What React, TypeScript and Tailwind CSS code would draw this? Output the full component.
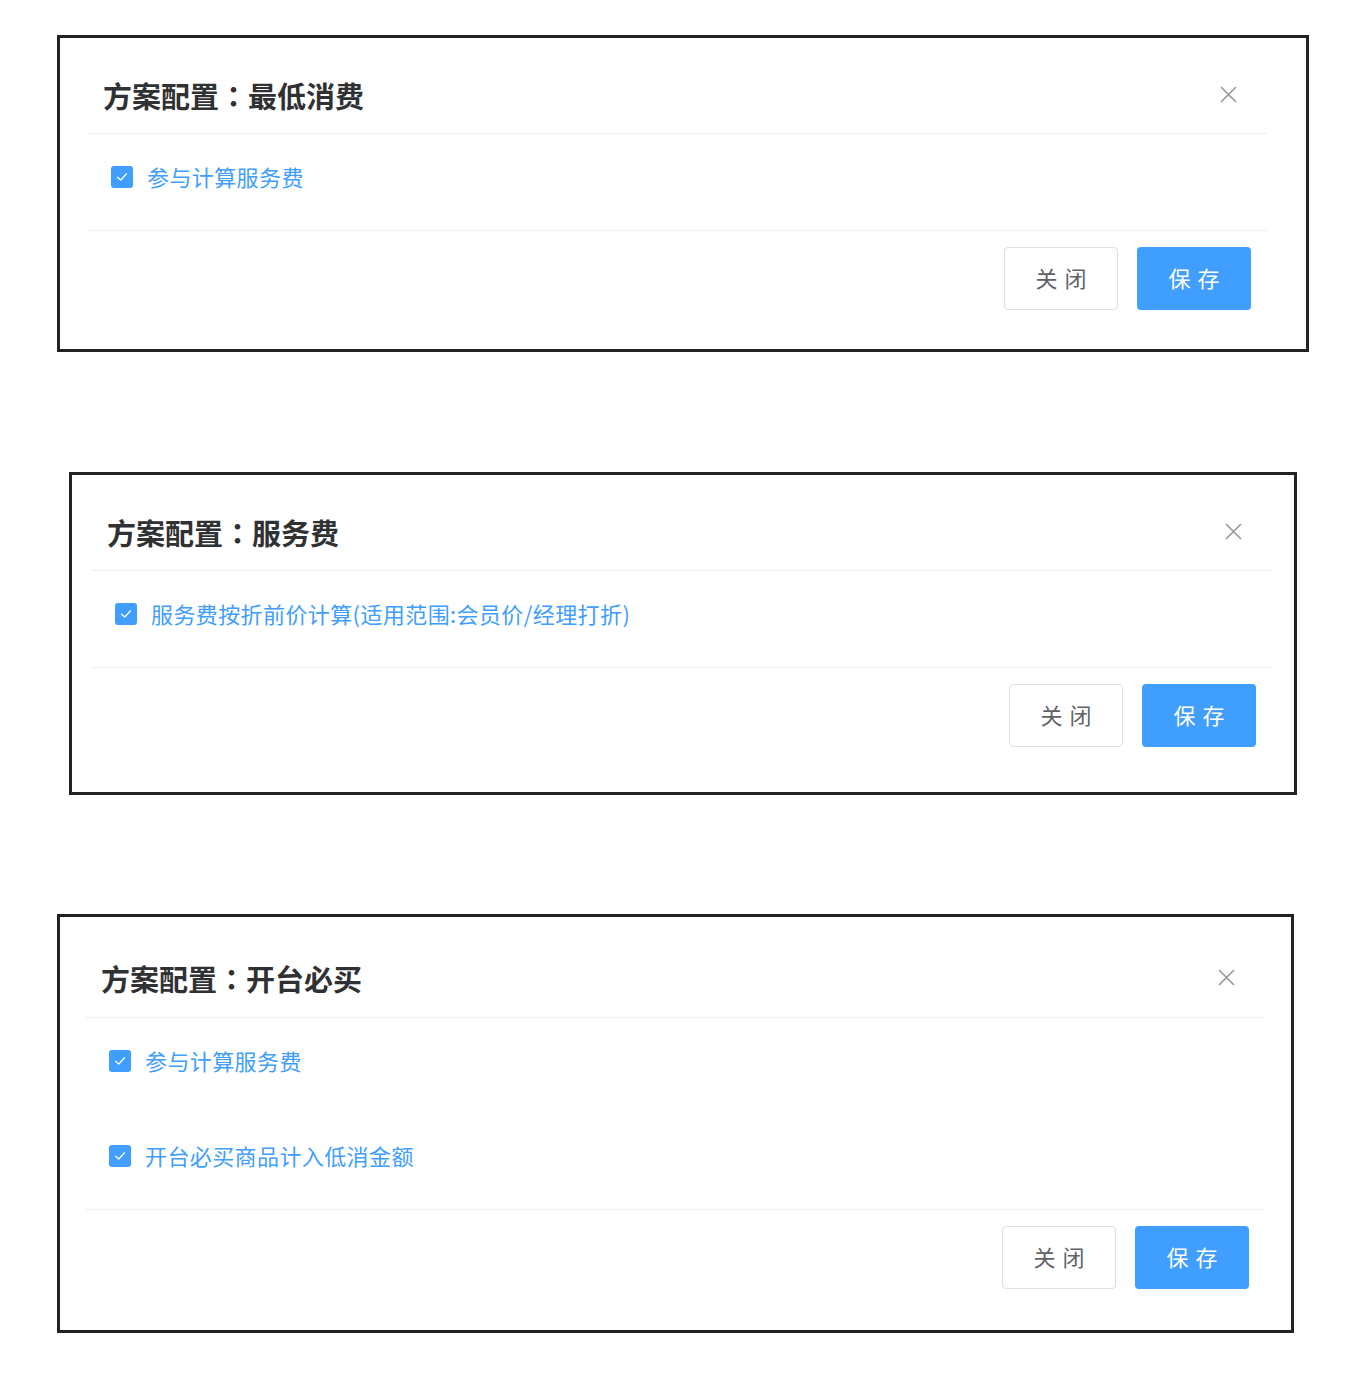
import React from 'react';

type Box = {
  prefix: string;
  name: string;
  options: string[];
  outer: string;
  inner: string;
  headTop: string;
  headBottom: string;
  footBottom: string;
};

const boxes: Box[] = [
  {
    prefix: '方案配置',
    name: '最低消费',
    options: ['参与计算服务费'],
    outer: 'mt-[35px] ml-[57px] w-[1252px]',
    inner: 'pl-[28px] pr-[39px]',
    headTop: 'pt-[39px]',
    headBottom: 'pb-[20px]',
    footBottom: 'pb-[39px]',
  },
  {
    prefix: '方案配置',
    name: '服务费',
    options: ['服务费按折前价计算(适用范围:会员价/经理打折)'],
    outer: 'mt-[120px] ml-[69px] w-[1228px]',
    inner: 'pl-[20px] pr-[22px]',
    headTop: 'pt-[39px]',
    headBottom: 'pb-[20px]',
    footBottom: 'pb-[45px]',
  },
  {
    prefix: '方案配置',
    name: '开台必买',
    options: ['参与计算服务费', '开台必买商品计入低消金额'],
    outer: 'mt-[119px] ml-[57px] w-[1237px]',
    inner: 'pl-[26px] pr-[26px]',
    headTop: 'pt-[43px]',
    headBottom: 'pb-[21px]',
    footBottom: 'pb-[41px]',
  },
];

const CheckBox = () => (
  <span className="flex h-[22px] w-[22px] shrink-0 items-center justify-center rounded-[3px] bg-[#409eff]">
    <svg width="16" height="16" viewBox="0 0 16 16" fill="none">
      <path d="M3.5 8.2 L6.8 11 L12.5 4.8" stroke="#fff" strokeWidth="1.3" strokeLinecap="round" strokeLinejoin="round" />
    </svg>
  </span>
);

const CloseIcon = () => (
  <svg width="17" height="17" viewBox="0 0 17 17" fill="none">
    <path d="M1 1 L16 16 M16 1 L1 16" stroke="#909399" strokeWidth="1.5" />
  </svg>
);

const ConfigBox = ({ box }: { box: Box }) => (
  <div className={`${box.outer} border-[3px] border-[#222] bg-white`}>
    <div className={box.inner}>
      {/* header */}
      <div className={`flex items-center justify-between border-b border-[#ebeef5] pl-[15px] pr-[30px] ${box.headTop} ${box.headBottom}`}>
        <span className="text-[29px] leading-[36px] font-bold text-[#303133]">
          {box.prefix}
          <span style={{ fontFamily: '"Noto Sans CJK TC", sans-serif' }}>：</span>
          {box.name}
        </span>
        <span className="-mt-[2px]">
          <CloseIcon />
        </span>
      </div>

      {/* body */}
      <div className="flex flex-col gap-[73px] border-b border-[#ebeef5] pl-[23px] pt-[32px] pb-[42px]">
        {box.options.map((opt, i) => (
          <label key={i} className="flex h-[22px] items-center gap-[14px]">
            <CheckBox />
            <span className="text-[22px] leading-none tracking-[0.4px] text-[#409eff] whitespace-nowrap -mt-[2px]">{opt}</span>
          </label>
        ))}
      </div>

      {/* footer */}
      <div className={`flex justify-end gap-[19px] pt-[16px] pr-[16px] ${box.footBottom}`}>
        <button className="flex h-[63px] w-[114px] items-center justify-center rounded-[4px] border border-[#dcdfe6] bg-white pb-[4px] pl-[7px] text-[22px] leading-none tracking-[7px] text-[#606266]">
          关闭
        </button>
        <button className="flex h-[63px] w-[114px] items-center justify-center rounded-[4px] bg-[#409eff] pb-[4px] pl-[7px] text-[22px] leading-none tracking-[7px] text-white">
          保存
        </button>
      </div>
    </div>
  </div>
);

export default function App() {
  return (
    <div
      className="min-h-[1389px] w-[1351px] bg-white flex flex-col"
      style={{ fontFamily: '"Noto Sans CJK SC", "Noto Sans", sans-serif' }}
    >
      {boxes.map((b, i) => (
        <ConfigBox key={i} box={b} />
      ))}
    </div>
  );
}
